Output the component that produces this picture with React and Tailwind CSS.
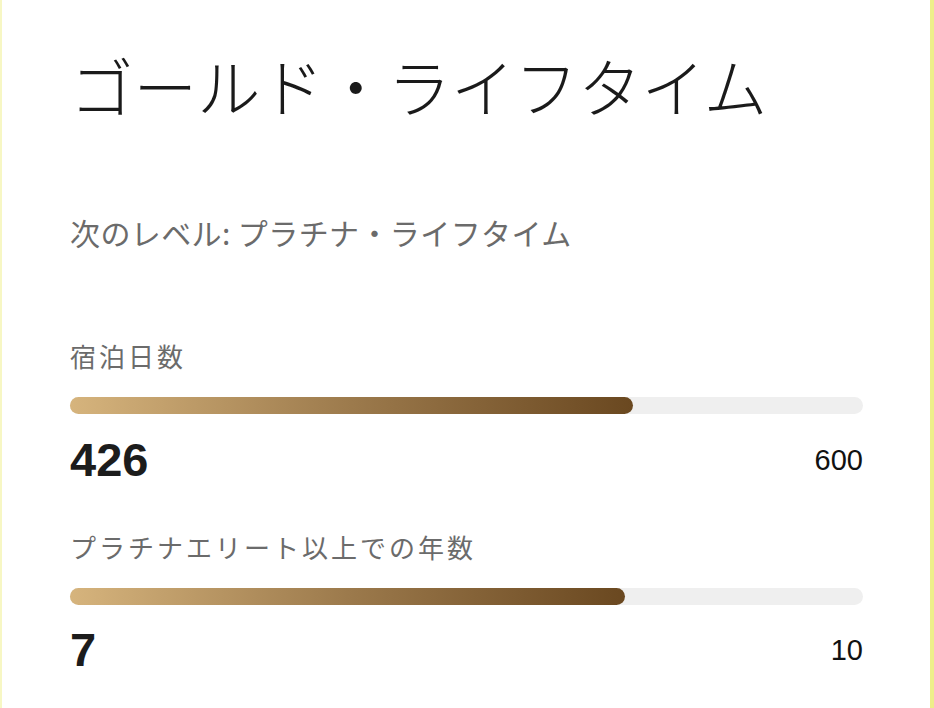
import React from 'react';

const jp = { fontFamily: '"Noto Sans CJK JP", "Noto Sans", sans-serif' };
const num = { fontFamily: '"Liberation Sans", Arial, sans-serif' };

const metrics = [
  { label: '宿泊日数', value: 426, target: 600, gap: 'mt-[87px]', numGap: 'mt-[18px]' },
  { label: 'プラチナエリート以上での年数', value: 7, target: 10, gap: 'mt-[42px]', numGap: 'mt-[17px]' },
];

const ProgressRow = ({ label, value, target, gap, numGap }) => (
  <div className={gap}>
    <p className="h-[34px] text-[26px] leading-[34px] tracking-[3px] text-[#6b6b6b]">{label}</p>
    <div className="mt-[24px] h-[17px] w-full rounded-full bg-[#efefef]">
      <div
        className="h-full rounded-full bg-gradient-to-r from-[#d6b47d] via-[#9c7a4c] to-[#6a4820]"
        style={{ width: `${(value / target) * 100}%` }}
      />
    </div>
    <div className={`${numGap} flex items-center justify-between`}>
      <span className="text-[47px] font-bold leading-[56px] text-[#1c1c1c]" style={num}>
        {value}
      </span>
      <span className="text-[29px] leading-[56px] text-[#111111]" style={num}>
        {target}
      </span>
    </div>
  </div>
);

export default function App() {
  return (
    <div className="h-[708px] w-[934px] overflow-hidden bg-white" style={jp}>
      <div className="h-full border-l-2 border-r-[4px] border-l-[#f7f7c4] border-r-[#eeee8a] pl-[68px] pr-[67px]">
        <h1 className="pt-[48px] text-[63.5px] font-light leading-[72px] text-[#1a1a1a]">
          ゴールド・ライフタイム
        </h1>
        <p className="mt-[92px] text-[30px] leading-[40px] tracking-[0.4px] text-[#6b6b6b]">
          次のレベル: プラチナ・ライフタイム
        </p>
        {metrics.map((m) => (
          <ProgressRow key={m.label} {...m} />
        ))}
      </div>
    </div>
  );
}
